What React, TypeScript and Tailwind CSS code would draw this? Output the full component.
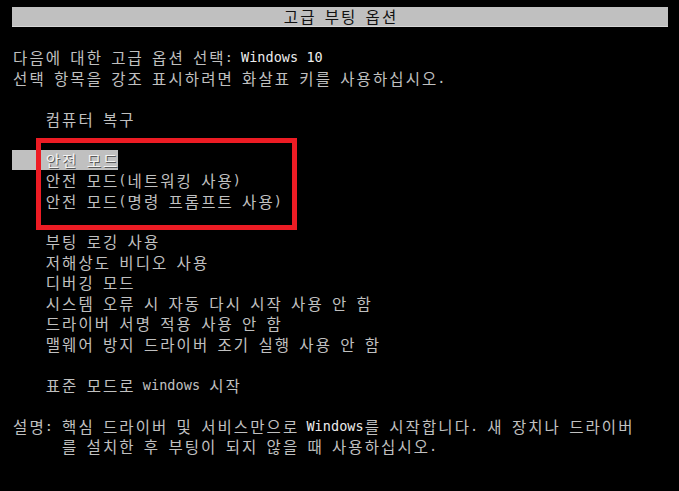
import React from 'react';

// text-mode grid: one cell is ~8.18px wide, Hangul takes two cells
const isWide = (ch: string) => /[\uAC00-\uD7A3]/.test(ch);
const isLatin = (ch: string) => /[A-Za-z0-9]/.test(ch);

interface LineProps {
  text?: string;
  className?: string;
  brightLatin?: boolean;
}

const Line: React.FC<LineProps> = ({ text = '', className = '', brightLatin = false }) => {
  return (
    <div className={`flex h-[20.46px] items-center leading-[20.46px] ${className}`}>
      {Array.from(text).map((ch, i) =>
        isWide(ch) ? (
          <span
            key={i}
            className="inline-block w-[16.36px] text-center font-['Noto_Sans_CJK_KR',sans-serif] text-[15.5px]"
          >
            {ch}
          </span>
        ) : (
          <span
            key={i}
            className={`inline-block w-[8.18px] whitespace-pre text-center font-['DejaVu_Sans_Mono',monospace] text-[13.5px] ${
              brightLatin && isLatin(ch) ? 'text-[#ededed]' : ''
            }`}
          >
            {ch}
          </span>
        )
      )}
    </div>
  );
};

const App: React.FC = () => {
  return (
    <div className="relative min-h-screen w-full overflow-hidden bg-black">
      <div className="flex flex-col pl-[12px] pt-[6.5px] text-[#c0c0c0]">
        <div className="flex h-[20.46px] w-[656px] items-center justify-center border-b border-[#d6d6d6] bg-[#c0c0c0] text-[#111]">
          <Line text="고급 부팅 옵션" />
        </div>
        <Line />
        <Line text="다음에 대한 고급 옵션 선택: Windows 10" brightLatin />
        <Line text="선택 항목을 강조 표시하려면 화살표 키를 사용하십시오." />
        <Line />
        <Line text="    컴퓨터 복구" />
        <Line />
        <Line
          text="    안전 모드"
          className="w-fit bg-[#c0c0c0] text-[#f4f4f4] [text-shadow:1px_1px_0_#5a5a5a]"
        />
        <Line text="    안전 모드(네트워킹 사용)" />
        <Line text="    안전 모드(명령 프롬프트 사용)" />
        <Line />
        <Line text="    부팅 로깅 사용" />
        <Line text="    저해상도 비디오 사용" />
        <Line text="    디버깅 모드" />
        <Line text="    시스템 오류 시 자동 다시 시작 사용 안 함" />
        <Line text="    드라이버 서명 적용 사용 안 함" />
        <Line text="    맬웨어 방지 드라이버 조기 실행 사용 안 함" />
        <Line />
        <Line text="    표준 모드로 windows 시작" />
        <Line />
        <Line text="설명: 핵심 드라이버 및 서비스만으로 Windows를 시작합니다. 새 장치나 드라이버" brightLatin />
        <Line text="      를 설치한 후 부팅이 되지 않을 때 사용하십시오." />
      </div>

      {/* red annotation box */}
      <div className="absolute left-[36px] top-[138px] h-[92px] w-[261px] border-[5px] border-[#ed1c24]" />
    </div>
  );
};

export default App;
